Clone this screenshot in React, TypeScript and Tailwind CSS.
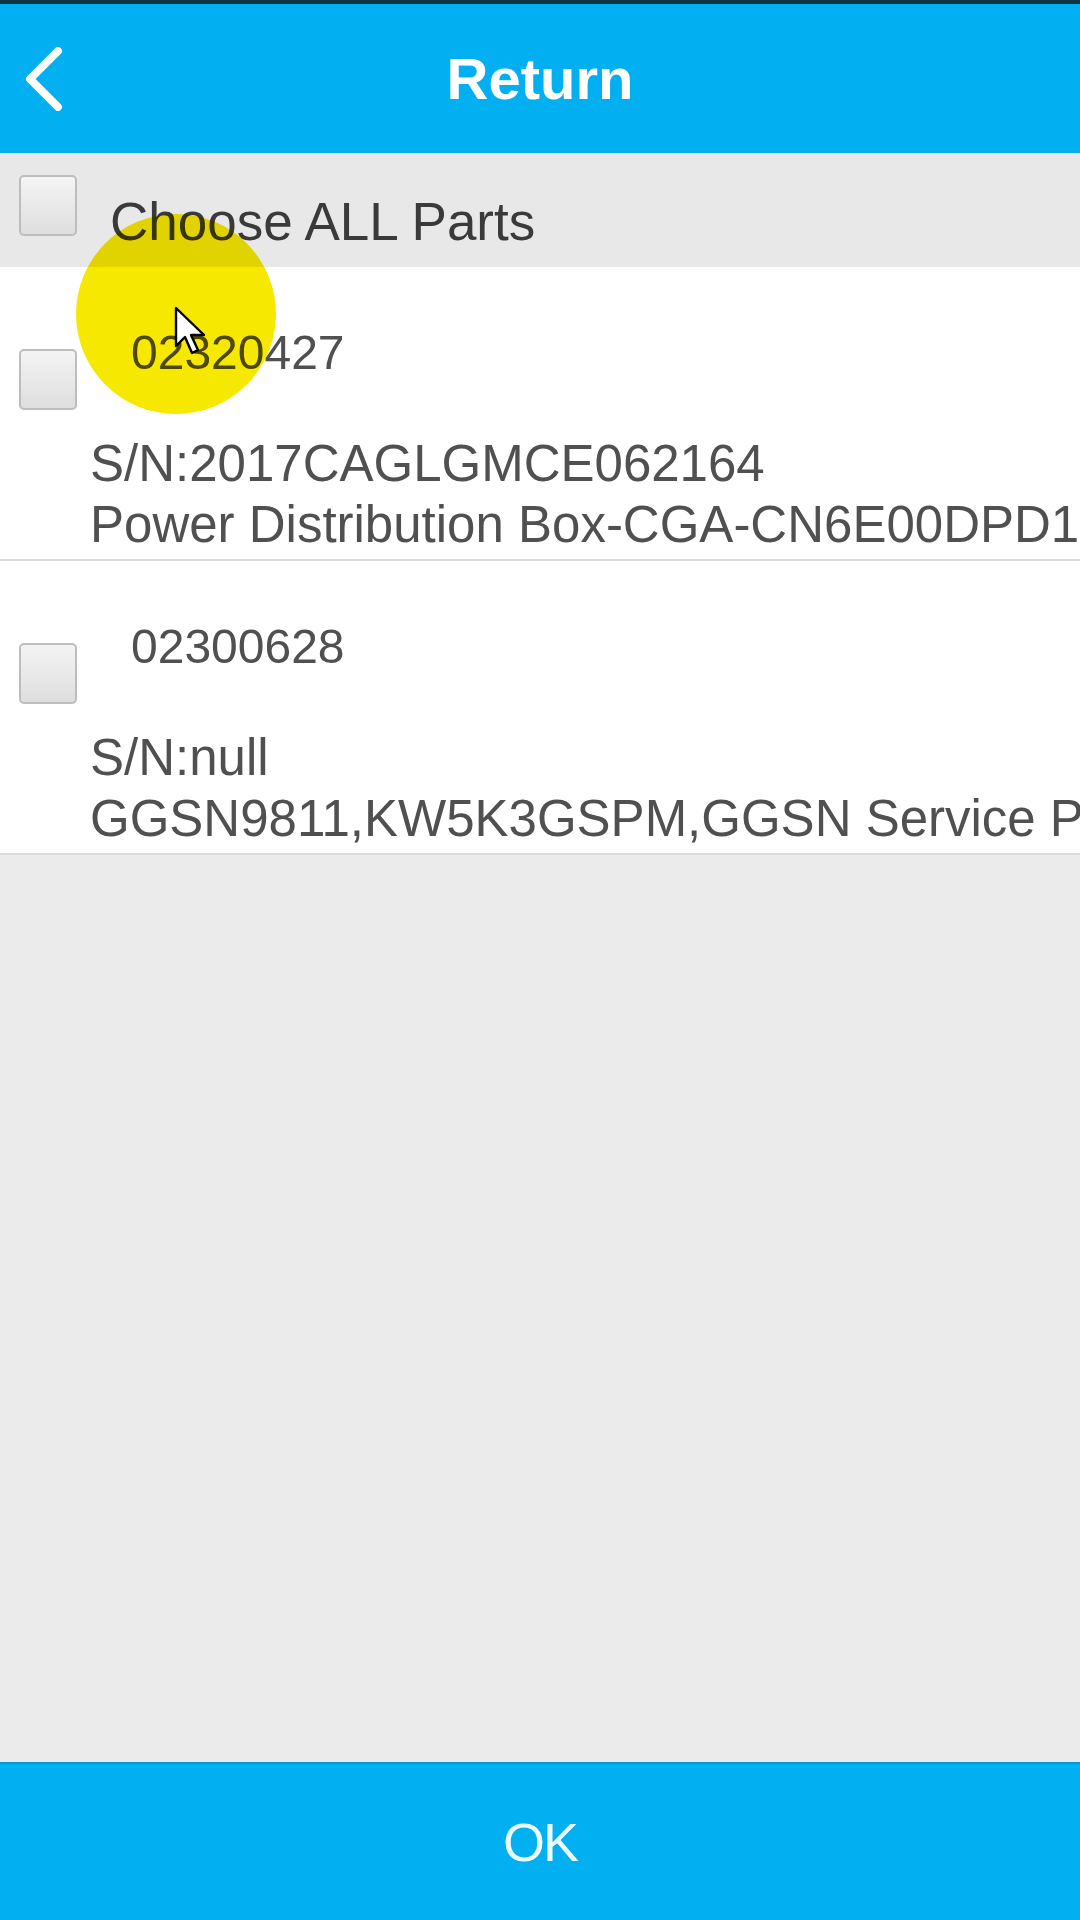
import React from 'react';

const FONT = { fontFamily: '"Liberation Sans", Arial, sans-serif' };

function Box() {
  return (
    <div className="w-[58px] h-[61px] shrink-0 rounded-[5px] border-2 border-[#bdbdbd] bg-gradient-to-b from-[#f4f4f4] to-[#dedede]" />
  );
}

type Part = { code: string; sn: string; desc: string };

const parts: Part[] = [
  { code: '02320427', sn: 'S/N:2017CAGLGMCE062164', desc: 'Power Distribution Box-CGA-CN6E00DPD1' },
  { code: '02300628', sn: 'S/N:null', desc: 'GGSN9811,KW5K3GSPM,GGSN Service Processing Unit' },
];

function PartRow({ p }: { p: Part }) {
  return (
    <div className="bg-white border-b-2 border-[#dadada] pb-[9px] text-[#505050]">
      <div className="flex items-start pl-[19px]">
        <div className="mt-[82px]">
          <Box />
        </div>
        <div className="ml-[54px] mt-[62px] text-[48px] leading-none">{p.code}</div>
      </div>
      <div className="pl-[90px] mt-[28px] text-[51px] leading-none whitespace-nowrap overflow-hidden">{p.sn}</div>
      <div className="pl-[90px] mt-[10px] text-[51px] leading-none whitespace-nowrap overflow-hidden">{p.desc}</div>
    </div>
  );
}

export default function App() {
  return (
    <div className="relative w-[1080px] h-[1920px] flex flex-col bg-[#ebebeb] overflow-hidden" style={FONT}>
      <div className="h-[4px] bg-[#0d3447]" />
      {/* Header */}
      <div className="h-[149px] bg-[#02aff0] grid grid-cols-[1fr_auto_1fr] items-center">
        <div className="pl-[24px]">
          <svg width="40" height="64" viewBox="0 0 40 64">
            <path d="M34 4 L6 32 L34 60" fill="none" stroke="white" strokeWidth="8" strokeLinecap="round" strokeLinejoin="round" />
          </svg>
        </div>
        <div className="text-white font-bold text-[58px] leading-none">Return</div>
        <div />
      </div>

      {/* Choose all */}
      <div className="h-[114px] bg-[#e8e8e8] flex items-start pl-[19px]">
        <div className="mt-[22px]">
          <Box />
        </div>
        <div className="ml-[33px] mt-[42px] text-[53px] leading-none text-[#3a3a3a]">Choose ALL Parts</div>
      </div>

      {parts.map(p => (
        <PartRow key={p.code} p={p} />
      ))}

      <div className="flex-1" />

      {/* OK button */}
      <div className="h-[158px] bg-[#02aff0] border-t-2 border-[#0a98d0] flex items-center justify-center">
        <span className="text-[#eafcff] text-[54px] leading-none tracking-[-2px]">OK</span>
      </div>

      {/* click highlight + cursor */}
      <div className="absolute left-[76px] top-[214px] w-[200px] h-[200px] rounded-full bg-[#f7e800] mix-blend-multiply" />
      <svg className="absolute left-[174px] top-[306px]" width="34" height="52" viewBox="0 0 17 26">
        <path d="M1 1 L1 20 L5.5 15.5 L9 23.5 L12 22 L8.5 14.5 L15 14.5 Z" fill="white" stroke="black" strokeWidth="1.2" strokeLinejoin="round" />
      </svg>
    </div>
  );
}
